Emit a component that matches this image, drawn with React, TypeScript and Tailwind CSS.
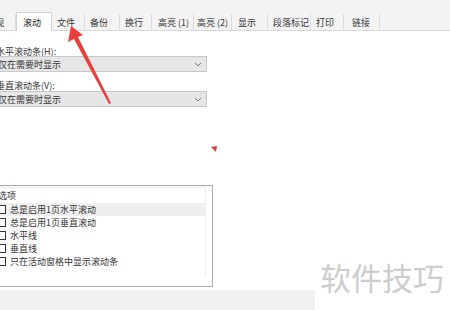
import React from 'react';

const tabs = [
  { label: '视', cls: 'w-[16px] justify-end pr-[11px] overflow-hidden' },
  { label: '滚动', cls: 'w-[36px] pl-[6px]', active: true },
  { label: '文件', cls: 'w-[33px] pl-[5px]' },
  { label: '备份', cls: 'w-[35px] pl-[5px]' },
  { label: '换行', cls: 'w-[32px] pl-[5px]' },
  { label: '高亮 (1)', cls: 'w-[42px] pl-[6px]' },
  { label: '高亮 (2)', cls: 'w-[38px] pl-[3px]' },
  { label: '显示', cls: 'w-[36px] pl-[6px]' },
  { label: '段落标记', cls: 'w-[43px] pl-[5px]' },
  { label: '打印', cls: 'w-[33px] pl-[5px]' },
  { label: '链接', cls: 'w-[36px] pl-[8px]' },
];

const options = [
  '总是启用1页水平滚动',
  '总是启用1页垂直滚动',
  '水平线',
  '垂直线',
  '只在活动窗格中显示滚动条',
];

const Chevron = () => (
  <svg width="8" height="5" viewBox="0 0 8 5" className="mr-[4px]">
    <path d="M1 1 L4 4 L7 1" fill="none" stroke="#777" strokeWidth="1" />
  </svg>
);

const Dropdown = () => (
  <div className="w-[215px] h-[16px] bg-[#e6e6e6] border border-[#c8c8c8] flex items-center justify-between pl-[5px]">
    <span>仅在需要时显示</span>
    <Chevron />
  </div>
);

export default function App() {
  return (
    <div
      className="relative w-[450px] h-[310px] overflow-hidden bg-white text-[9px] leading-[11px] text-[#333]"
      style={{ fontFamily: '"Noto Sans CJK SC", "Noto Sans", sans-serif' }}
    >
      {/* Tab strip */}
      <div className="h-[31px] bg-[#f3f3f3] border-b border-[#dadada] flex items-end">
        {tabs.map((t) => (
          <div
            key={t.label}
            className={
              t.active
                ? `${t.cls} h-[19px] -mb-px bg-white border-l border-r border-t border-[#d2d2d2] flex items-center text-[#222] whitespace-nowrap`
                : `${t.cls} h-[16px] border-r border-[#dcdcdc] flex items-center text-[#333] whitespace-nowrap`
            }
          >
            {t.label}
          </div>
        ))}
      </div>

      {/* Content */}
      <div className="-ml-[8px] flex flex-col">
        <div className="pl-[4px] mt-[15px] h-[10px] flex items-center">水平滚动条(H):</div>
        <div>
          <Dropdown />
        </div>
        <div className="pl-[4px] mt-[8px] h-[10px] flex items-center">垂直滚动条(V):</div>
        <div className="mt-[1px]">
          <Dropdown />
        </div>

        {/* small red mark */}
        <div className="h-[78px] flex items-end pl-[219px] pb-[32px]">
          <svg width="7" height="7" viewBox="0 0 7 7">
            <polygon points="0,1 6,0 5,6" fill="#e23b3b" />
          </svg>
        </div>

        {/* Options group */}
        <div className="w-[221px] h-[102px] border border-[#a8a8a8] px-[4px] pt-[1px]">
          <div className="w-[209px] h-[90px] border-t border-r border-[#ececec]">
            <div className="h-[14px] flex items-center pl-[1px]">选项</div>
            <div className="flex flex-col mt-[1px]">
              {options.map((o, i) => (
                <div
                  key={o}
                  className={
                    i === 0
                      ? 'h-[13px] flex items-center bg-[#efefef]'
                      : 'h-[13px] flex items-center'
                  }
                >
                  <div className="w-[9px] h-[9px] border border-[#333] bg-white mr-[4px] shrink-0" />
                  <span>{o}</span>
                </div>
              ))}
            </div>
          </div>
        </div>
      </div>

      {/* Bottom bar */}
      <div className="absolute left-0 bottom-0 w-[315px] h-[20px] bg-[#f0f0f0]" />

      {/* Watermark */}
      <div className="absolute right-[6px] bottom-[16px] text-[31px] leading-[34px] text-[#cdcdcd]">
        软件技巧
      </div>

      {/* Red arrow annotation */}
      <svg className="absolute left-0 top-0 pointer-events-none" width="450" height="310" viewBox="0 0 450 310">
        <polygon
          points="71,26 83,35 78,37 111,103 109,104 74,39 68,42"
          fill="#e8403c"
        />
      </svg>
    </div>
  );
}
